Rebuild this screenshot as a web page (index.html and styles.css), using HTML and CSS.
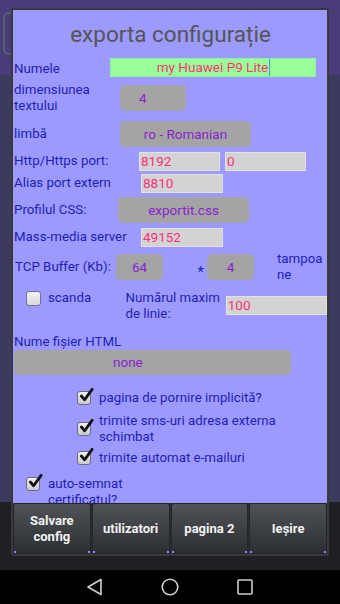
FILE: index.html
```html
<!DOCTYPE html>
<html lang="ro">

<head>
  <meta charset="UTF-8">
  <meta name="viewport" content="width=device-width, initial-scale=1.0">
  <title>exporta configurație</title>
  <link rel="stylesheet" href="styles.css">
</head>

<body>
<div class="screen">
  <div class="app-header">
    <div class="ghost-box"></div>
  </div>
  <div class="app-main"></div>
  <div class="app-footer"></div>
  <div class="nav-bar">
    <svg class="nav-icon" width="18" height="18" viewBox="0 0 18 18"><path d="M15 1.5 L2 9 L15 16.5 Z" fill="none" stroke="#cfcfcf" stroke-width="1.6" stroke-linejoin="round"/></svg>
    <svg class="nav-icon" width="18" height="18" viewBox="0 0 18 18"><circle cx="9" cy="9" r="7.8" fill="none" stroke="#cfcfcf" stroke-width="1.6"/></svg>
    <svg class="nav-icon" width="18" height="18" viewBox="0 0 18 18"><rect x="2" y="2" width="14" height="14" rx="1" fill="none" stroke="#cfcfcf" stroke-width="1.6"/></svg>
  </div>

  <div class="dialog">
    <div class="content">
      <div class="title">exporta configurație</div>

      <div class="row row-name">
        <span class="label">Numele</span>
        <span class="input input-green">my Huawei P9 Lite<span class="caret"></span></span>
      </div>

      <div class="row row-size">
        <span class="label two-lines">dimensiunea<br>textului</span>
        <span class="spinner spinner-size">4</span>
      </div>

      <div class="row row-lang">
        <span class="label">limbă</span>
        <span class="spinner spinner-lang">ro - Romanian</span>
      </div>

      <div class="row row-http">
        <span class="label">Http/Https port:</span>
        <span class="input input-port1">8192</span>
        <span class="input input-port2">0</span>
      </div>

      <div class="row row-alias">
        <span class="label">Alias port extern</span>
        <span class="input input-short">8810</span>
      </div>

      <div class="row row-css">
        <span class="label">Profilul CSS:</span>
        <span class="spinner spinner-css">exportit.css</span>
      </div>

      <div class="row row-media">
        <span class="label">Mass-media server</span>
        <span class="input input-short">49152</span>
      </div>

      <div class="row row-tcp">
        <span class="label label-tcp">TCP Buffer (Kb):</span>
        <span class="spinner spinner-tcp">64</span>
        <span class="star">*</span>
        <span class="spinner spinner-tcp">4</span>
        <span class="label two-lines tampoane">tampoa<br>ne</span>
      </div>

      <div class="row row-scan">
        <span class="checkbox unchecked"></span>
        <span class="label scan-label">scanda</span>
        <span class="label two-lines max-label">Numărul maxim<br>de linie:</span>
        <span class="input input-max">100</span>
      </div>

      <div class="label html-label">Nume fișier HTML</div>
      <div class="spinner spinner-html">none</div>

      <div class="check-row check-indent row-home">
        <span class="checkbox checked"></span>
        <span class="label">pagina de pornire implicită?</span>
      </div>
      <div class="check-row check-indent row-sms">
        <span class="checkbox checked"></span>
        <span class="label two-lines">trimite sms-uri adresa externa<br>schimbat</span>
      </div>
      <div class="check-row check-indent row-mail">
        <span class="checkbox checked"></span>
        <span class="label">trimite automat e-mailuri</span>
      </div>
      <div class="check-row row-cert">
        <span class="checkbox checked"></span>
        <span class="label two-lines">auto-semnat<br>certificatul?</span>
      </div>
    </div>

    <div class="buttons">
      <div class="btn">Salvare<br>config</div>
      <div class="btn">utilizatori</div>
      <div class="btn">pagina 2</div>
      <div class="btn">Ieșire</div>
    </div>
  </div>
</div>
</body>

</html>
```

FILE: styles.css
```css
* {
  box-sizing: border-box;
}

body {
  margin: 0;
  padding: 0;
  font-family: Roboto, "Noto Sans", Arial, sans-serif;
  background-color: #000;
}

.screen {
  position: relative;
  width: 340px;
  height: 604px;
  display: flex;
  flex-direction: column;
  overflow: hidden;
}

.app-header {
  height: 75px;
  background-color: #4a3b7a;
  padding: 12px 0 0 3px;
}

.ghost-box {
  width: 14px;
  height: 43px;
  border: 2px solid #55606a;
  border-radius: 6px;
}

.app-main {
  flex: 1;
  background-color: #3c3a5d;
}

.app-footer {
  height: 68px;
  background-color: #1f2023;
}

.nav-bar {
  height: 34px;
  background-color: #000;
  display: flex;
  justify-content: center;
  align-items: center;
  gap: 57px;
}

/* dialog floats over the app */
.dialog {
  position: absolute;
  left: 11px;
  top: 8px;
  width: 318px;
  height: 548px;
  border: 2px solid #3a3a3c;
  border-radius: 2px;
  display: flex;
  flex-direction: column;
  background-color: #2a2b2e;
}

.content {
  height: 493px;
  background-color: #9c9aff;
  overflow: hidden;
  padding-left: 1px;
}

.title {
  height: 48px;
  line-height: 48px;
  text-align: center;
  font-size: 22.5px;
  color: #555;
}

.label {
  font-size: 13.3px;
  color: #1f1fb4;
  line-height: 16px;
  white-space: nowrap;
}

.row {
  display: flex;
  align-items: center;
}

.input {
  height: 19px;
  line-height: 17px;
  font-size: 13.5px;
  color: #ff2f7a;
  background-color: #d3d3d3;
  border: 1px solid #e2e2e2;
  padding-left: 1px;
  white-space: nowrap;
}

.input-green {
  background-color: #99ff99;
  border-color: #8ff0a8;
  text-align: center;
}

.caret {
  display: inline-block;
  width: 1px;
  height: 17px;
  margin-left: 1px;
  vertical-align: top;
  background-color: #3aa0ff;
}

.spinner {
  height: 26px;
  line-height: 26px;
  font-size: 13.5px;
  color: #8a1fd0;
  background-color: #a4a4a4;
  border-radius: 5px;
  text-align: center;
  white-space: nowrap;
}

.row-name {
  height: 19px;
}

.row-name .label {
  width: 96px;
  padding-top: 3px;
}

.row-name .input {
  width: 206px;
}

.row-size {
  height: 36px;
  margin-top: 3px;
}

.row-size .label {
  width: 106px;
}

.spinner-size {
  width: 66px;
  text-align: left;
  padding-left: 19px;
}

.row-lang {
  height: 36px;
}

.row-lang .label {
  width: 106px;
}

.spinner-lang {
  width: 131px;
}

.row-http {
  height: 18px;
}

.row-http .label {
  width: 125px;
}

.input-port1 {
  width: 81px;
}

.input-port2 {
  width: 81px;
  margin-left: 5px;
}

.row-alias {
  height: 26px;
}

.row-alias .label {
  width: 127px;
}

.input-short {
  width: 82px;
}

.row-css {
  height: 28px;
}

.row-css .label {
  width: 104px;
}

.spinner-css {
  width: 131px;
}

.row-media {
  height: 26px;
}

.row-media .label {
  width: 127px;
}

.row-tcp {
  height: 34px;
}

.label-tcp {
  width: 102px;
  padding-left: 1px;
}

.spinner-tcp {
  width: 47px;
}

.star {
  width: 44px;
  text-align: right;
  padding-right: 3px;
  padding-top: 9px;
  font-size: 15px;
  color: #1f1fb4;
}

.tampoane {
  margin-left: 23px;
}

.row-scan {
  height: 44px;
  align-items: flex-start;
}

.row-scan .checkbox {
  margin: 7px 0 0 12px;
}

.scan-label {
  width: 78px;
  margin: 6px 0 0 7px;
}

.max-label {
  width: 101px;
  margin-top: 6px;
}

.input-max {
  width: 102px;
  margin-top: 12px;
}

.html-label {
  margin-top: 6px;
  height: 16px;
}

.spinner-html {
  width: 277px;
  height: 25px;
  line-height: 25px;
  text-align: left;
  padding-left: 99px;
}

/* checkboxes */
.check-row {
  display: flex;
  align-items: center;
  gap: 8px;
  padding-left: 12px;
}

.check-indent {
  padding-left: 63px;
}

.row-home {
  margin-top: 14px;
  height: 18px;
}

.row-sms {
  margin-top: 6px;
  height: 32px;
}

.row-mail {
  margin-top: 4px;
  height: 18px;
}

.row-cert {
  margin-top: 8px;
  height: 32px;
  align-items: flex-start;
}

.row-cert .checkbox {
  margin-top: 2px;
}

.row-cert .label {
  margin-top: 1px;
}

.checkbox {
  position: relative;
  flex: none;
  width: 14px;
  height: 14px;
  border-radius: 3px;
  border: 1px solid #6a6a80;
  background: linear-gradient(#f2f2f2, #c9c9cc);
}

.checkbox.unchecked {
  width: 15px;
  height: 15px;
  border-color: #72709a;
  background: linear-gradient(#f4f4f4, #d8d8dc);
}

.checkbox.checked::after {
  content: "";
  position: absolute;
  left: 1px;
  top: -5px;
  width: 15px;
  height: 16px;
  background: no-repeat center / contain url("data:image/svg+xml;utf8,<svg xmlns='http://www.w3.org/2000/svg' viewBox='0 0 16 16'><path d='M2.5 8.5 L6 12.5 L14 1.5' fill='none' stroke='%23111' stroke-width='3' stroke-linecap='round' stroke-linejoin='round'/></svg>");
}

/* bottom buttons */
.buttons {
  flex: 1;
  display: grid;
  grid-template-columns: repeat(4, 1fr);
  gap: 1px;
  background-color: #2c2d30;
}

.btn {
  position: relative;
  display: flex;
  align-items: center;
  justify-content: center;
  text-align: center;
  font-size: 13px;
  font-weight: bold;
  line-height: 16px;
  color: #f2f2f2;
  background: linear-gradient(#4f5257, #2c2e32);
  border: 1px solid #25262a;
  border-radius: 3px;
}

.btn::before,
.btn::after {
  content: "";
  position: absolute;
  bottom: 0;
  width: 2px;
  height: 2px;
  background-color: #8d86ff;
}

.btn::before {
  left: 0;
}

.btn::after {
  right: 0;
}
```
